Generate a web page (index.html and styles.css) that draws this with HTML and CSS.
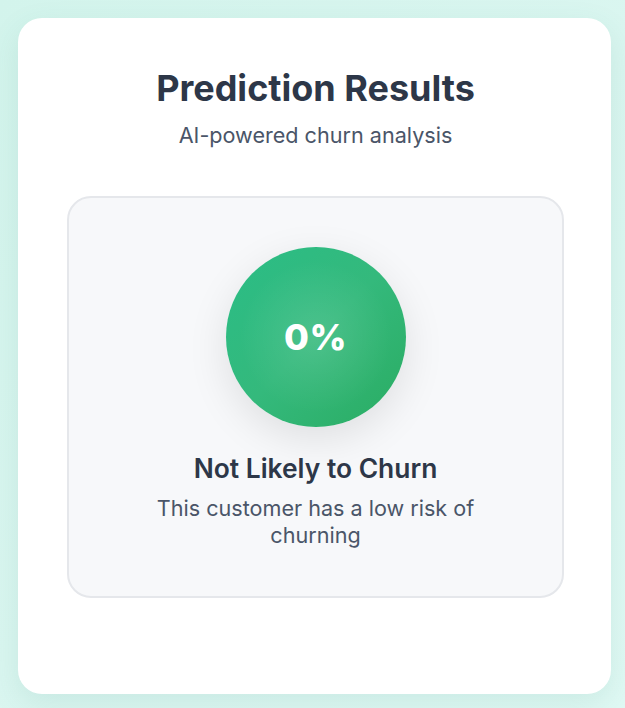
FILE: index.html
```html
<!DOCTYPE html>
<html>
<head>
<meta charset="utf-8">
<link rel="stylesheet" href="styles.css">
</head>
<body>
<main class="page">
  <section class="card">
    <h1 class="title">Prediction Results</h1>
    <p class="subtitle">AI-powered churn analysis</p>
    <div class="result">
      <div class="gauge"><span class="pct">0%</span></div>
      <h2 class="verdict">Not Likely to Churn</h2>
      <p class="desc">This customer has a low risk of churning</p>
    </div>
  </section>
</main>
</body>
</html>
```
FILE: styles.css
```css
html, body {
  margin: 0;
  padding: 0;
}
body {
  font-family: Inter, "Noto Sans", sans-serif;
  background: linear-gradient(135deg, #d3f4ec 0%, #daf6f0 50%, #e0f9f4 100%);
  min-height: 708px;
  overflow: hidden;
}
.page {
  padding: 18px 14px 15px 18px;
}
.card {
  background: #fff;
  border-radius: 24px;
  padding: 48px 47px 96px 49px;
  box-shadow: 0 10px 30px rgba(60, 140, 120, 0.12);
  text-align: center;
}
.title {
  margin: 0;
  font-size: 36px;
  line-height: 44px;
  font-weight: 700;
  color: #2d3748;
}
.subtitle {
  margin: 10px 0 0;
  font-size: 21.6px;
  line-height: 30px;
  color: #4a5568;
}
.result {
  margin-top: 46px;
  background: #f7f8fa;
  border: 2px solid #e5e7eb;
  border-radius: 24px;
  padding: 49px 24px 47px;
  display: flex;
  flex-direction: column;
  align-items: center;
}
.gauge {
  width: 180px;
  height: 180px;
  border-radius: 50%;
  background:
    radial-gradient(circle at 50% 50%, rgba(255,255,255,0.12) 0%, rgba(255,255,255,0) 60%),
    linear-gradient(135deg, #2abd86 0%, #34b97c 50%, #2aac62 100%);
  box-shadow: 0 12px 40px rgba(0, 0, 0, 0.1);
  display: flex;
  align-items: center;
  justify-content: center;
}
.pct {
  color: #fff;
  font-size: 36px;
  font-weight: 800;
  letter-spacing: 0.5px;
}
.verdict {
  margin: 24px 0 0;
  font-size: 26.4px;
  line-height: 34px;
  font-weight: 600;
  color: #2d3748;
}
.desc {
  margin: 10px 0 0;
  max-width: 340px;
  font-size: 21.6px;
  line-height: 27px;
  color: #4a5568;
}
```
